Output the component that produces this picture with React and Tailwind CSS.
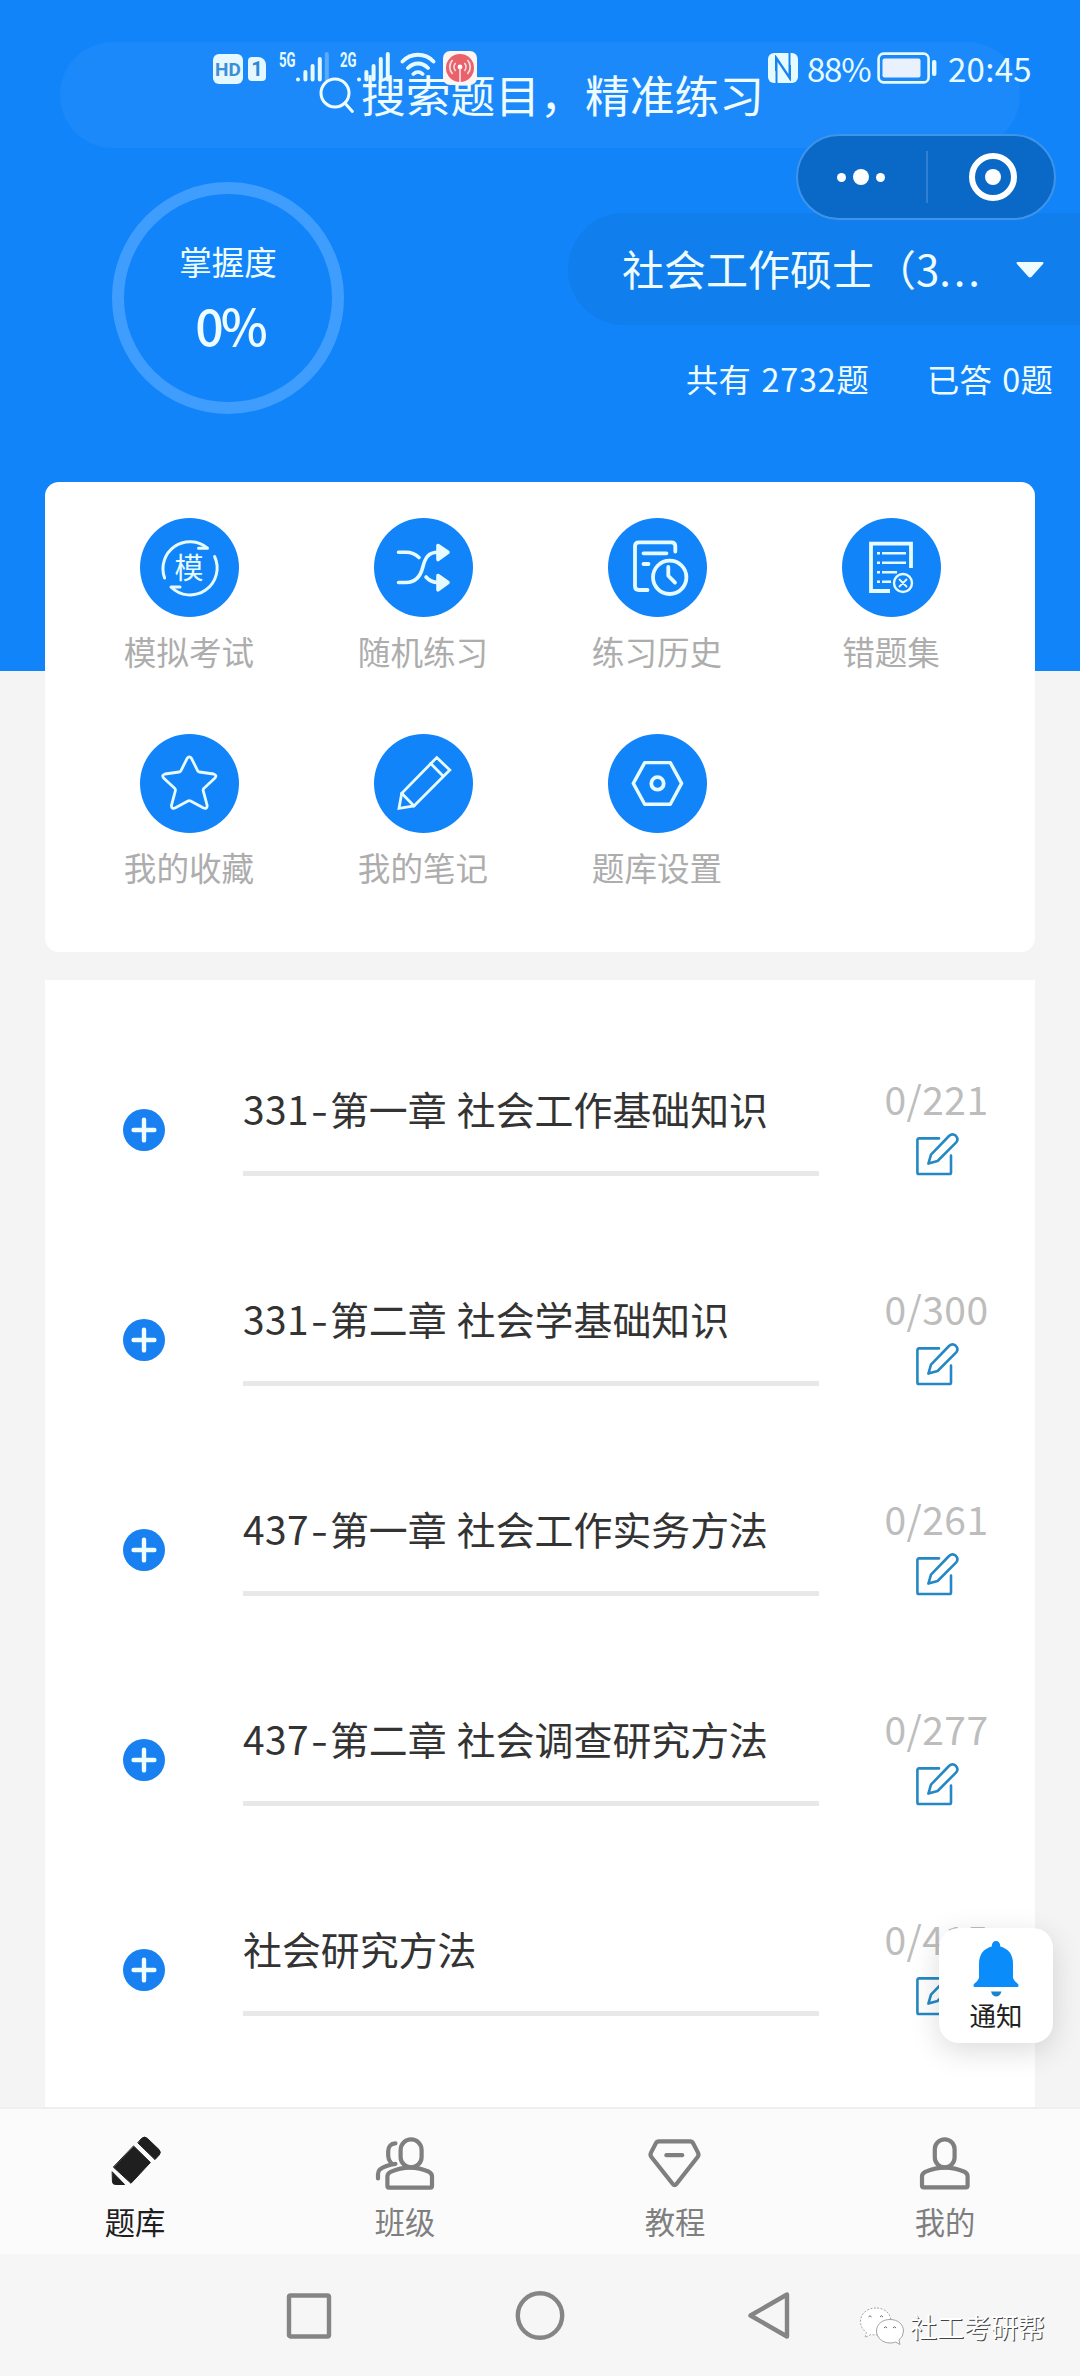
import { clsx } from 'clsx';

const TOOLS = [
  { label: '模拟考试', icon: MockIcon },
  { label: '随机练习', icon: ShuffleIcon },
  { label: '练习历史', icon: HistoryIcon },
  { label: '错题集', icon: WrongIcon },
  { label: '我的收藏', icon: StarIcon },
  { label: '我的笔记', icon: NoteIcon },
  { label: '题库设置', icon: SettingIcon },
];

const CHAPTERS = [
  { code: '331', title: '第一章 社会工作基础知识', done: 0, total: 221 },
  { code: '331', title: '第二章 社会学基础知识', done: 0, total: 300 },
  { code: '437', title: '第一章 社会工作实务方法', done: 0, total: 261 },
  { code: '437', title: '第二章 社会调查研究方法', done: 0, total: 277 },
  { title: '社会研究方法', done: 0, total: 415 },
];

const TABS = [
  { label: '题库', icon: BankIcon, active: true },
  { label: '班级', icon: ClassIcon },
  { label: '教程', icon: CourseIcon },
  { label: '我的', icon: MineIcon },
];

/* ---------- Tool icons (99 x 99 round buttons) ---------- */

function ToolSvg({ children, width = 3 }) {
  return (
    <svg
      viewBox="0 0 99 99"
      className="absolute inset-0 h-full w-full"
      fill="none"
      stroke="#e6fbff"
      strokeWidth={width}
      strokeLinecap="round"
      strokeLinejoin="round"
    >
      {children}
    </svg>
  );
}

function MockIcon() {
  return (
    <>
      <ToolSvg>
        <path d="M24.6 60A27 27 0 0 1 67.5 30.2H58.5" />
        <path d="M74.6 38.5A27 27 0 0 1 31 69H40" />
      </ToolSvg>
      <span className="relative -mt-0.5 text-[29px] leading-none text-[#e6fbff]">模</span>
    </>
  );
}

function ShuffleIcon() {
  return (
    <ToolSvg width={3.6}>
      <path d="M24.5 34.3H32C38 34.3 41.5 36 45 39.5" />
      <path d="M24.5 64.5H32C42 64.5 46.5 58 48.7 49.5C51 40 54 34.3 64 34.3" />
      <path d="M52 59C55 62.5 58 64.3 64 64.5" />
      <path d="M64 27.5L74 34.3L64 41.5Z" fill="#e6fbff" />
      <path d="M64 57.5L74 64.5L64 71.8Z" fill="#e6fbff" />
    </ToolSvg>
  );
}

function HistoryIcon() {
  return (
    <ToolSvg width={3.8}>
      <path d="M67.3 33.5V28.3Q67.3 24.3 63.3 24.3H31Q27 24.3 27 28.3V68Q27 72 31 72H39.5" />
      <path d="M35.5 35.3H58.5M35.5 46H40.5" />
      <circle cx="61.7" cy="59.3" r="16.7" />
      <path d="M60.3 49V57.7L67 64.6" />
    </ToolSvg>
  );
}

function WrongIcon() {
  return (
    <ToolSvg width={2.4}>
      <path
        d="M69 50V25.6H29V73H48"
        strokeWidth="3.8"
        strokeLinecap="butt"
        strokeLinejoin="miter"
      />
      <path
        d="M35 35.3H38M40 35.3H64M35 44.7H38M40 44.7H64M35 54.2H38M40 54.2H55M35 63.7H38M40 63.7H49"
        strokeLinecap="butt"
      />
      <circle cx="61" cy="65" r="9" />
      <path d="M57.5 61.5L64.5 68.5M64.5 61.5L57.5 68.5" strokeWidth="1.8" />
    </ToolSvg>
  );
}

function StarIcon() {
  return (
    <ToolSvg width={2.8}>
      <path d="M47 24.6Q49.3 21 51.6 24.6L57.6 36.6Q58.2 37.8 59.6 38L73.6 40Q77.2 41 75 44L64 54.2Q63 55.2 63.2 56.6L67.2 71.6Q67 75.2 63.6 74L50.6 66.9Q49.3 66.2 48 66.9L35 74Q31.6 75.2 31.4 71.6L35.4 56.6Q35.6 55.2 34.6 54.2L23.6 44Q21.4 41 25 40L39 38Q40.4 37.8 41 36.6Z" />
    </ToolSvg>
  );
}

function NoteIcon() {
  return (
    <ToolSvg width={2.8}>
      <path d="M62.7 23.6L75.8 36L40 72L25 74.3L27.7 59.3Z" strokeLinejoin="miter" />
      <path d="M56.7 29.6L69 42M27.7 59.3L40 72" />
    </ToolSvg>
  );
}

function SettingIcon() {
  return (
    <ToolSvg width={3.4}>
      <path d="M36.7 28.6H62.3L73.6 49.4L62.3 70.2H36.7L25.3 49.4Z" />
      <circle cx="49.5" cy="49.4" r="6.2" strokeWidth="3.8" />
    </ToolSvg>
  );
}

/* ---------- Tab bar icons (60 x 60) ---------- */

function TabSvg({ children }) {
  return (
    <svg
      viewBox="0 0 60 60"
      className="size-[60px]"
      fill="none"
      stroke="#7f7f7f"
      strokeWidth="4.2"
      strokeLinecap="round"
      strokeLinejoin="round"
    >
      {children}
    </svg>
  );
}

function BankIcon() {
  return (
    <TabSvg>
      <g fill="#1f1f1f" stroke="#1f1f1f" strokeWidth="1">
        <path d="M28.8 13.2L45.4 29.5L26 50.3L8.6 34.3Z" />
        <path d="M36.8 5.2Q39.6 2.8 42.4 5.4L54 16.6Q56.6 19.4 54.2 22L50 26.6L33 10Z" />
        <path d="M7.4 39L19.6 51.5H10.4Q7.4 51.5 7.4 48.5Z" />
      </g>
    </TabSvg>
  );
}

function ClassIcon() {
  return (
    <TabSvg>
      <rect x="25.6" y="6.4" width="21" height="28" rx="10.5" />
      <path d="M14 54.6Q12.4 54.6 12.4 53V43.6Q12.4 40.2 15.6 38.8C28 33.6 42 33.6 54 38.8Q57 40.2 57 43.6V53Q57 54.6 55.4 54.6Z" />
      <path d="M20.4 10.4C15.5 10.6 13.2 14 13.2 18V23C13.2 27 15 28.6 16.6 30.6M20.4 30.8C14 31.6 8.4 33.6 5 36.4Q3 38 3 41V45.4" />
    </TabSvg>
  );
}

function CourseIcon() {
  return (
    <TabSvg>
      <path d="M14 8.4H45Q47.2 8.4 48.2 10.4L53 19.6Q54.2 22 52.6 24L31.4 51Q29.6 53.2 27.8 51L6.4 24Q4.8 22 6 19.6L10.8 10.4Q11.8 8.4 14 8.4Z" />
      <path d="M21.4 22.2H37.2" />
    </TabSvg>
  );
}

function MineIcon() {
  return (
    <TabSvg>
      <rect x="19.8" y="6.4" width="19.8" height="28" rx="9.9" />
      <path d="M8.6 54.4Q7 54.4 7 52.8V43.6Q7 40.2 10.2 38.8C23 33.4 37 33.4 49.4 38.8Q52.6 40.2 52.6 43.6V52.8Q52.6 54.4 51 54.4Z" />
    </TabSvg>
  );
}

/* ---------- System status bar ---------- */

function SignalBars({ faded }) {
  return (
    <svg viewBox="0 0 34 32" className="h-8 w-[34px]" stroke="#e6fbff" strokeWidth="4" strokeLinecap="round">
      <path d="M2 28.5V28.6M9.4 21V28.6M16.6 15V28.6M23.8 8V28.6" />
      <path d="M30.8 3V28.6" opacity={faded ? 0.3 : 1} />
    </svg>
  );
}

function StatusBar() {
  return (
    <div className="absolute top-[51px] left-[213px] flex h-9 w-[821px] justify-between text-[#e6fbff]">
      <div className="flex items-start">
        <span className="mt-[3px] flex size-[30px] items-center justify-center rounded-md bg-[#e6f8ff] font-['Roboto',sans-serif] text-[19px] leading-none font-bold text-[#3c8fd6]">
          HD
        </span>
        <span className="mt-1.5 ml-[5px] flex h-6 w-[18px] items-center justify-center rounded-sm rounded-tr-lg bg-[#e6f8ff] font-['Roboto',sans-serif] text-xl leading-none font-bold text-[#2f86d6]">
          1
        </span>
        <span className="mt-0 ml-[13px] w-[17px] origin-left scale-x-[0.66] font-['Roboto',sans-serif] text-[20px] leading-[18px] font-bold">
          5G
        </span>
        <SignalBars faded />
        <span className="ml-[10px] w-[17px] origin-left scale-x-[0.66] font-['Roboto',sans-serif] text-[20px] leading-[18px] font-bold">
          2G
        </span>
        <SignalBars />
        <svg viewBox="0 0 36 30" className="ml-[9px] h-[30px] w-9" fill="none" stroke="#e6fbff" strokeWidth="3.8" strokeLinecap="round">
          <path d="M2.5 10.5C11 1.5 25 1.5 33.5 10.5M8 17C14 11 22 11 28 17M13.4 23C16 20.5 20 20.5 22.6 23" />
        </svg>
        <svg viewBox="0 0 34 34" className="ml-[7px] size-[34px]" fill="none">
          <rect width="34" height="34" rx="7" fill="#fdf4f4" />
          <circle cx="17" cy="17" r="14" fill="#e9616a" />
          <circle cx="17" cy="16" r="2.4" fill="#fff" />
          <path
            d="M17 17V31M12.6 20A6 6 0 0 1 12.6 12M21.4 20A6 6 0 0 0 21.4 12M9.6 23A10 10 0 0 1 9.6 9M24.4 23A10 10 0 0 0 24.4 9"
            stroke="#fbe0e2"
            strokeWidth="1.7"
          />
        </svg>
      </div>

      <div className="flex items-start text-[33px] leading-[38px]">
        <svg viewBox="0 0 30 30" className="mt-0.5 mr-[9px] size-[30px]">
          <rect width="30" height="30" rx="6" fill="#e6fbff" />
          <path d="M8.5 30V5L22 25V12M21.500 0V25L8 5V18" fill="none" stroke="#1784f4" strokeWidth="2" />
        </svg>
        <span className="-mt-0.5 w-[66px] tracking-[-1.2px]">88%</span>
        <svg viewBox="0 0 60 32" className="mt-px ml-1 h-8 w-[60px]">
          <rect x="1.6" y="1.6" width="50" height="28.8" rx="5" fill="none" stroke="#e6fbff" strokeWidth="2.6" />
          <rect x="5.5" y="6.5" width="38" height="19" rx="2" fill="#e9f2fc" />
          <rect x="55" y="8" width="4.4" height="16" rx="2" fill="#e6fbff" />
        </svg>
        <span className="-mt-0.5 ml-[11px] w-[86px] tracking-[0.3px]">20:45</span>
      </div>
    </div>
  );
}

function Capsule() {
  return (
    <div className="absolute top-[134px] left-[796px] flex h-[86px] w-[260px] items-center rounded-full border-2 border-[#3f94ea] bg-[#0a68c6]">
      <div className="flex w-[128px] items-center justify-center gap-[7px] pr-0.5">
        <span className="size-[9px] rounded-full bg-white" />
        <span className="size-4 rounded-full bg-white" />
        <span className="size-[9px] rounded-full bg-white" />
      </div>
      <span className="h-[52px] w-0.5 bg-[#2f80d2]" />
      <div className="flex flex-1 items-center justify-center pl-1">
        <span className="flex size-12 items-center justify-center rounded-full border-[6px] border-white">
          <span className="size-4 rounded-full bg-white" />
        </span>
      </div>
    </div>
  );
}

function Header() {
  return (
    <header className="relative h-[671px] bg-[#1284fa] pt-[42px] text-[#effcff]">
      {/* Search */}
      <div className="mx-[60px] flex h-[106px] items-center justify-center rounded-[53px] bg-[#1c89fb] pb-px pl-[3px]">
        <svg viewBox="0 0 36 38" className="-mr-px h-[38px] w-9" fill="none" stroke="currentColor" strokeWidth="3" strokeLinecap="round">
          <circle cx="16" cy="17" r="14" />
          <path d="M25.8 27L33.4 35.4" />
        </svg>
        <span className="ml-[7px] text-[44.8px] leading-none">搜索题目，精准练习</span>
      </div>

      <div className="flex justify-between">
        {/* Mastery ring */}
        <div className="mt-[34px] ml-[112px] flex size-[232px] flex-col items-center rounded-full border-12 border-[#3f9dfd] pt-[49px]">
          <span className="text-[32.5px] leading-[36px]">掌握度</span>
          <span className="mt-[17px] pl-1 text-[50px] leading-[56px] font-medium tracking-[-3px]">0%</span>
        </div>

        <div className="mt-[65px] w-[512px]">
          <div className="flex h-28 items-center rounded-l-[56px] bg-[#107eec] pl-[54px]">
            <span className="-mt-0.5 w-[366px] text-[42px] leading-[60px] whitespace-nowrap">
              社会工作硕士（3<span className="tracking-[2.8px]">...</span>
            </span>
            <svg viewBox="0 0 30 18" className="mt-0.5 ml-[27px] h-[18px] w-[30px]">
              <path d="M3 1H27Q29.5 1 28 3L16.6 15.8Q15 17.4 13.4 15.8L2 3Q.5 1 3 1Z" fill="currentColor" />
            </svg>
          </div>
          <div className="mt-[35px] flex justify-end pr-[27px] text-[32.3px] leading-9 tracking-[0.2px] [word-spacing:3px]">
            <span>
              共有 <span className="tracking-[0.8px]">2732</span>题
            </span>
            <span className="ml-[58px]">已答 0题</span>
          </div>
        </div>
      </div>

      <StatusBar />
      <Capsule />
    </header>
  );
}

function ToolCard() {
  return (
    <section className="relative mx-[45px] -mt-[189px] grid h-[470px] grid-cols-4 content-start rounded-[14px] bg-white px-[27px] pt-9">
      {TOOLS.map(({ label, icon: Icon }) => (
        <div key={label} className="flex h-[216px] flex-col items-center">
          <div className="relative flex size-[99px] items-center justify-center rounded-full bg-[#1284fa]">
            <Icon />
          </div>
          <span className="mt-[14px] text-[32.6px] leading-[40px] text-[#adadad]">{label}</span>
        </div>
      ))}
    </section>
  );
}

function EditIcon() {
  return (
    <svg viewBox="0 0 48 48" className="size-12" fill="none" stroke="#2588c4" strokeWidth="2.6" strokeLinecap="round" strokeLinejoin="round">
      <path d="M26 8.4H6Q4.4 8.4 4.4 10V42.4Q4.4 44 6 44H36.4Q38 44 38 42.4V25.5" />
      <path d="M15.4 33.6L18 24.6L36 6Q39.4 3 42.6 5.6Q46 9 43.2 12.4L24.6 31Z" />
    </svg>
  );
}

function ChapterRow({ chapter }) {
  return (
    <div className="flex h-[210px] items-start">
      <span className="mt-[59px] ml-[78px] flex size-[42px] items-center justify-center rounded-full bg-[#1880f0]">
        <svg viewBox="0 0 26 26" className="size-[26px]" stroke="#f0fdff" strokeWidth="4.4" strokeLinecap="round">
          <path d="M13 2.6V23.4M2.6 13H23.4" />
        </svg>
      </span>
      <div className="mt-[30px] ml-[78px] h-[96px] w-[576px] border-b-[5px] border-[#e8e8e8] text-[38.9px] leading-[56px] whitespace-nowrap text-[#333] [word-spacing:1.5px]">
        {chapter.code && (
          <>
            <span className="tracking-[0.4px]">{chapter.code}</span>
            <span className="inline-block w-[21px] scale-x-125 text-center">-</span>
          </>
        )}
        {chapter.title}
      </div>
      <div className="ml-[46px] flex w-[143px] flex-col items-center pt-[23px]">
        <span className="text-[39px] leading-[50px] tracking-[0.4px] text-[#bdbdbd]">
          {chapter.done}/{chapter.total}
        </span>
        <span className="mt-[7px]">
          <EditIcon />
        </span>
      </div>
    </div>
  );
}

function NoticeButton() {
  return (
    <button className="absolute top-[1928px] left-[939px] flex h-[115px] w-[114px] flex-col items-center rounded-[20px] bg-white pt-[13px] shadow-[0_8px_30px_rgba(0,0,0,0.14)]">
      <svg viewBox="0 0 46 56" className="h-14 w-[46px]" fill="#0a8dfb">
        <path d="M23 0Q27 0 27.3 5.5Q40 9 40 23V37Q41 40 45 43Q46.500 46 44 46H2Q-.5 46 1 43Q5 40 6 37V23Q6 9 18.700 5.500Q19 0 23 0Z" />
        <path d="M18 50.500H28.500Q27 55.500 23.200 55.500Q19.500 55.500 18 50.500Z" fill="#1c84cc" />
      </svg>
      <span className="mt-[3px] text-[26.5px] leading-[30px] text-[#222]">通知</span>
    </button>
  );
}

function TabBar() {
  return (
    <nav className="flex h-[147px] border-t-2 border-[#efefef] bg-[#fbfbfb]">
      {TABS.map(({ label, icon: Icon, active }) => (
        <div key={label} className="flex flex-1 flex-col items-center pt-[24px]">
          <Icon />
          <span className={clsx('mt-2 text-[30.3px] leading-[40px]', active ? 'text-[#1f1f1f]' : 'text-[#7f7f7f]')}>
            {label}
          </span>
        </div>
      ))}
    </nav>
  );
}

function SystemNav() {
  return (
    <div className="relative flex h-[122px] bg-[#f6f6f6] pt-[35px]">
      <svg viewBox="0 0 510 52" className="ml-[284px] h-[52px] w-[510px]" fill="none" stroke="#858585" strokeWidth="4.4" strokeLinejoin="round">
        <rect x="5" y="6.500" width="40" height="41" rx="1.500" />
        <circle cx="256" cy="26.500" r="22.200" />
        <path d="M503 5.500V47.500L466.500 26.500Z" />
      </svg>
      {/* Account signature */}
      <div className="absolute top-[52px] left-[859px] flex items-center">
        <svg viewBox="0 0 46 42" className="h-[42px] w-[46px]" fill="#fff" stroke="#9a9a9a" strokeWidth="0.9">
          <path d="M17 2C8 2 1.500 8 1.500 15.500Q1.500 22 7.500 26.500L6 31.500L12 28.500Q28 31 32 18C33 8 26 2 17 2Z" strokeDasharray="2 1.500" />
          <path d="M31 13.500C23 13.500 17.500 18.500 17.500 25C17.500 32 24 37 31 37Q34 37 36.500 36L41 38.500L40 34Q44.500 30.500 44.500 25C44.500 18.500 39 13.500 31 13.500Z" />
          <path d="M9.500 11Q11 8.500 12.500 11M21 11Q22.500 8.500 24 11M25 22Q26.500 19.500 28 22M34 22Q35.500 19.500 37 22" fill="none" stroke="#555" />
        </svg>
        <span className="ml-[5px] text-[27px] leading-[30px] text-white [text-shadow:1px_1px_0_#444]">社工考研帮</span>
      </div>
    </div>
  );
}

export default function App() {
  return (
    <div className="relative flex h-[2376px] w-[1080px] flex-col overflow-hidden bg-[#f4f4f4] font-['Noto_Sans_CJK_SC',sans-serif]">
      <Header />
      <ToolCard />
      <main className="mx-[45px] mt-7 h-[1127px] bg-white pt-[70px]">
        {CHAPTERS.map((chapter) => (
          <ChapterRow key={chapter.total} chapter={chapter} />
        ))}
      </main>
      <TabBar />
      <SystemNav />
      <NoticeButton />
    </div>
  );
}
